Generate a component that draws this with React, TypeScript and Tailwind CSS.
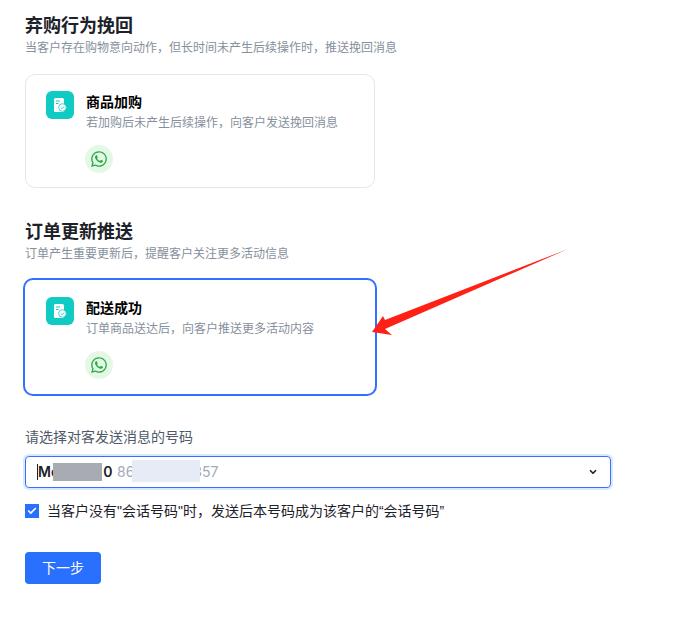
import React from "react";
import { ChevronDown, Check } from "lucide-react";
import { FaWhatsapp } from "react-icons/fa";

const font = "font-['Inter','Noto_Sans_CJK_SC',sans-serif]";

const NoteIcon = () => (
  <div className="flex h-7 w-7 items-center justify-center rounded-md bg-[#10cac4]">
    <svg width="14" height="16" viewBox="0 0 14 16" fill="none">
      <path d="M1 2.5A1.5 1.5 0 0 1 2.5 1h7A1.5 1.5 0 0 1 11 2.5V14a1 1 0 0 1-1 1H2.500A1.500 1.500 0 0 1 1 13.500Z" fill="#fff" />
      <path d="M3 4h4M3 6.500h2.500" stroke="#10cac4" strokeWidth="1" />
      <circle cx="9.500" cy="10.500" r="3.800" fill="#fff" stroke="#10cac4" strokeWidth="0.800" />
      <path d="M7.800 10.500l1.300 1.200 2.200-2.200" stroke="#10cac4" strokeWidth="0.900" />
    </svg>
  </div>
);

type CardProps = { title: string; desc: string; active?: boolean };

const Card = ({ title, desc, active }: CardProps) => (
  <div
    className={
      active
        ? "flex w-[354px] gap-3 rounded-[10px] border-2 border-[#3370ff] pb-[15px] pl-[21px] pt-[17px]"
        : "ml-[2px] flex w-[350px] gap-3 rounded-[10px] border border-[#e5e6eb] pb-[14px] pl-5 pt-4"
    }
  >
    <NoteIcon />
    <div>
      <div className="text-sm leading-[22px] font-bold text-black">{title}</div>
      <div className="mt-px text-xs leading-[18px] text-[#86909c]">{desc}</div>
      <div className="mt-[13px] -ml-px flex h-7 w-7 items-center justify-center rounded-full bg-[#e3f9e5]">
        <FaWhatsapp className="h-[18px] w-[18px] text-[#2aa845]" />
      </div>
    </div>
  </div>
);

export default function App() {
  return (
    <div className={`relative h-[625px] w-[685px] overflow-hidden bg-white pl-[23px] pt-[13px] ${font}`}>
      <div className="ml-[2px] text-lg leading-[26px] font-bold text-[#1d2129]">弃购行为挽回</div>
      <div className="ml-[2px] text-xs leading-[18px] text-[#86909c]">当客户存在购物意向动作，但长时间未产生后续操作时，推送挽回消息</div>
      <div className="mt-[17px]">
        <Card title="商品加购" desc="若加购后未产生后续操作，向客户发送挽回消息" />
      </div>

      <div className="ml-[2px] mt-[30px] text-lg leading-[27px] font-bold text-[#1d2129]">订单更新推送</div>
      <div className="ml-[2px] text-xs leading-[18px] text-[#86909c]">订单产生重要更新后，提醒客户关注更多活动信息</div>
      <div className="mt-[15px]">
        <Card active title="配送成功" desc="订单商品送达后，向客户推送更多活动内容" />
      </div>

      <div className="ml-[2px] mt-[32px] text-sm leading-[18px] text-[#4e5969]">请选择对客发送消息的号码</div>
      <div className="ml-[2px] mt-[10px] flex h-8 w-[586px] items-center justify-between rounded border border-[#3370ff] pl-[11px] pr-3 text-sm ring-2 ring-[#dbe7ff]">
        <div className="flex items-center">
          <span className="h-4 w-px bg-[#1d2129]" />
          <span className="w-[79px] font-semibold text-[#1d2129]">Me<span className="ml-[44px]">0</span></span>
          <span className="text-[#a0aabb]">86<span className="ml-[59px]">357</span></span>
        </div>
        <ChevronDown className="h-[10px] w-[10px] text-[#1d2129]" strokeWidth={4} />
      </div>

      <div className="ml-[2px] mt-[14px] flex items-center gap-2">
        <div className="flex h-[14px] w-[14px] items-center justify-center bg-[#2970ff]">
          <Check className="h-[10px] w-[10px] text-white" strokeWidth={4} />
        </div>
        <span className="font-['Liberation_Sans','Noto_Sans_CJK_SC',sans-serif] text-sm leading-[18px] text-[#1d2129]">当客户没有"会话号码"时，发送后本号码成为该客户的“会话号码”</span>
      </div>

      <button className="ml-[2px] mt-[32px] flex h-8 w-[76px] items-center justify-center rounded bg-[#2970ff] text-sm text-white">下一步</button>

      {/* mosaic over the number */}
      <div className="absolute left-[53px] top-[463px] h-[18px] w-[49px] bg-[#a9abb2]" />
      <div className="absolute left-[132px] top-[460px] h-[22px] w-[68px] bg-[#e6ebf6]" />

      {/* annotation arrow */}
      <svg className="absolute left-0 top-0" width="685" height="625" fill="none">
        <path d="M568 249L385 320L383 316L372 332L392 335L385 329Z" fill="#ff2116" />
      </svg>
    </div>
  );
}
